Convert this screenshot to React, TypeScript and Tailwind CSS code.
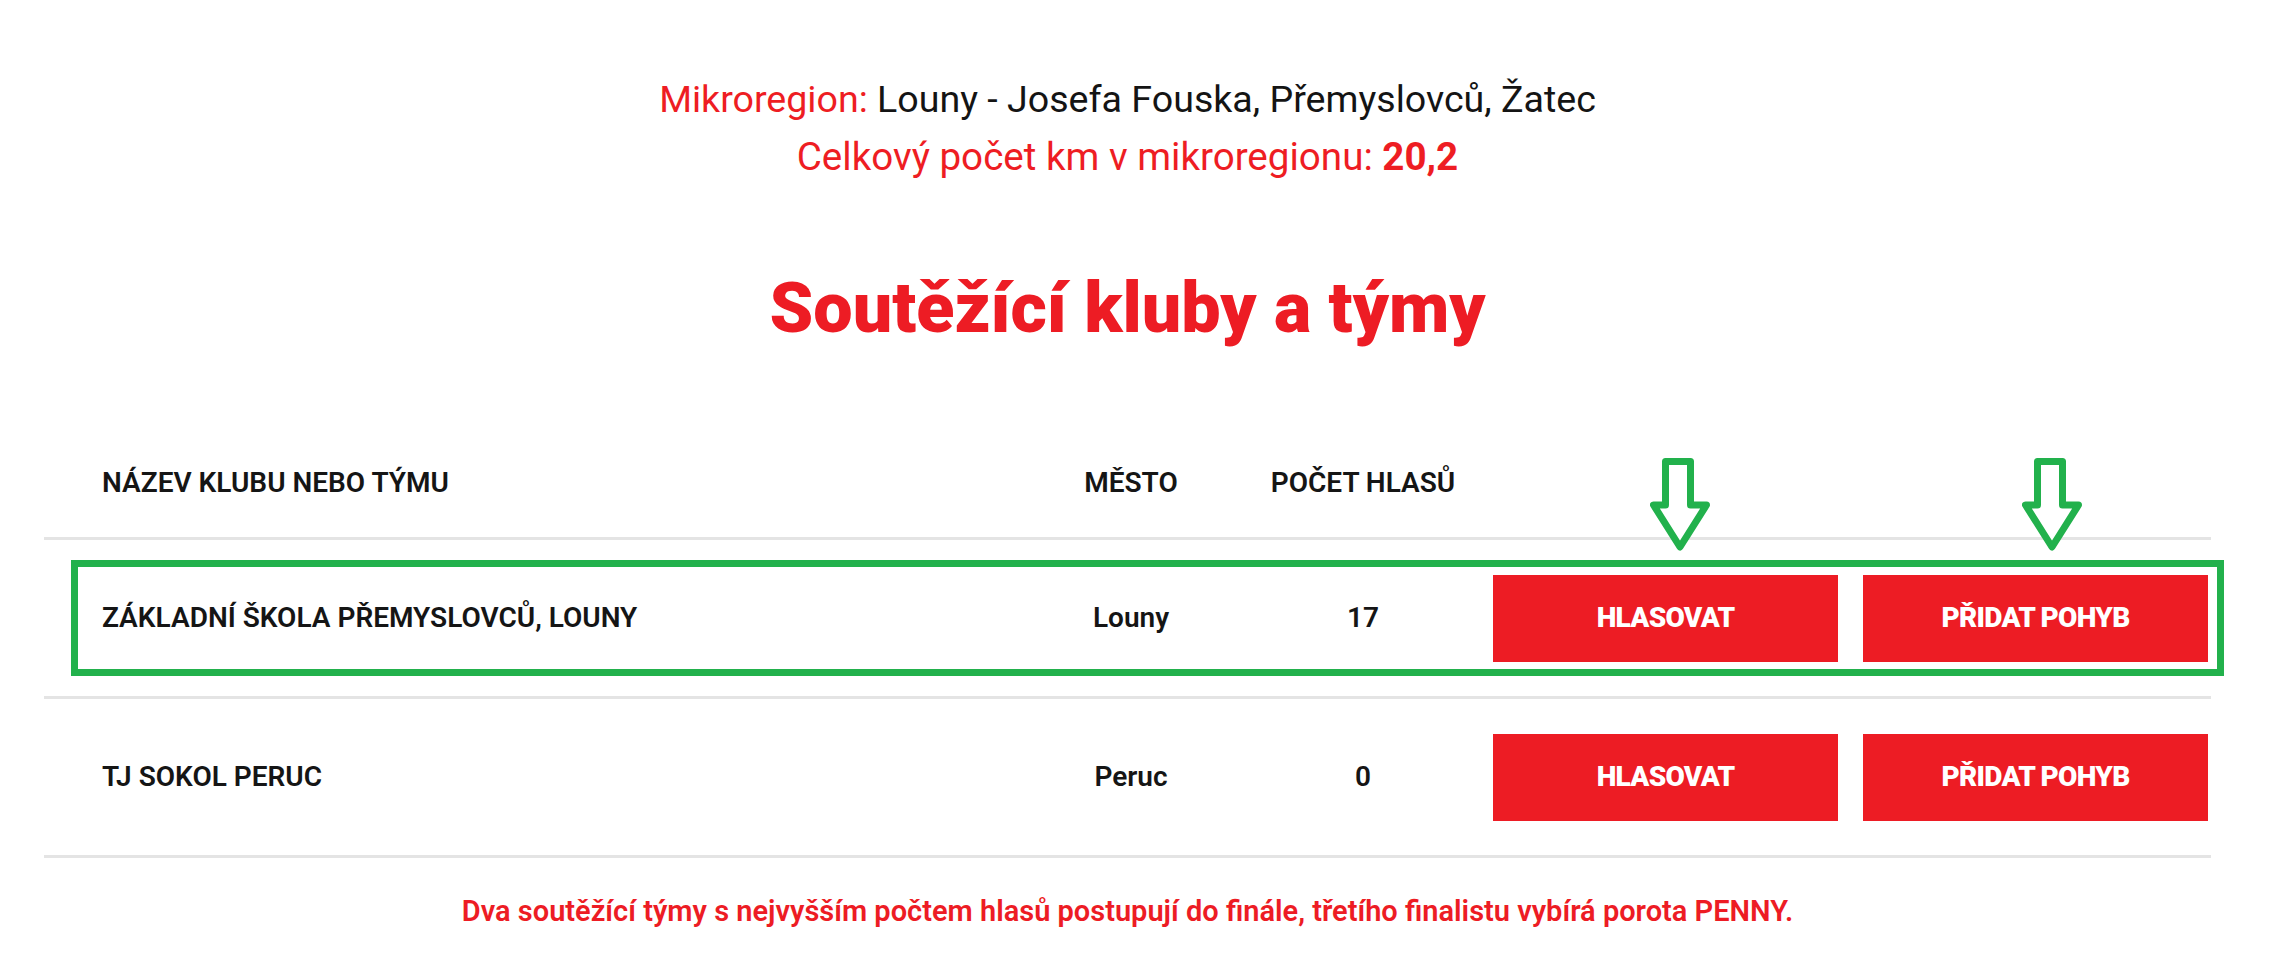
import React from "react";

type Team = {
  name: string;
  city: string;
  votes: number;
};

const teams: Team[] = [
  { name: "ZÁKLADNÍ ŠKOLA PŘEMYSLOVCŮ, LOUNY", city: "Louny", votes: 17 },
  { name: "TJ SOKOL PERUC", city: "Peruc", votes: 0 },
];

function DownArrow({ className }: { className: string }) {
  return (
    <svg
      className={className}
      width="60"
      height="95"
      viewBox="0 0 60 95"
      fill="white"
      stroke="#22b14c"
      strokeWidth="7"
      strokeLinejoin="round"
    >
      <path d="M15.5 3.5 H40.5 V47 H56.5 L30 89 L3.5 47 H15.5 Z" />
    </svg>
  );
}

function TeamRow({ team }: { team: Team }) {
  return (
    <div className="flex h-[159px] items-center border-b-[3px] border-[#e4e4e4] pr-[3px]">
      <div className="flex-1 pl-[58px] text-[28px] font-semibold leading-[40px] text-[#151515]">
        {team.name}
      </div>
      <div className="w-[170px] text-center text-[28px] font-semibold leading-[40px] text-[#151515]">
        {team.city}
      </div>
      <div className="ml-[47px] w-[200px] text-center text-[28px] font-semibold leading-[40px] text-[#151515]">
        {team.votes}
      </div>
      <button className="ml-[30px] flex h-[87px] w-[345px] items-center justify-center bg-[#ed1c24] text-[28px] font-black tracking-tight text-white">
        HLASOVAT
      </button>
      <button className="ml-[25px] flex h-[87px] w-[345px] items-center justify-center bg-[#ed1c24] text-[28px] font-black tracking-tight text-white">
        PŘIDAT POHYB
      </button>
    </div>
  );
}

export default function App() {
  return (
    <div
      className="relative min-h-[971px] w-[2276px] bg-white"
      style={{ fontFamily: "Roboto, 'Noto Sans', sans-serif" }}
    >
      <div className="ml-[44px] w-[2167px] pt-[70px]">
        <div className="text-center leading-[58px]">
          <p className="text-[37.6px] text-[#ee1d23]">
            Mikroregion: <span className="text-[#141414]">Louny - Josefa Fouska, Přemyslovců, Žatec</span>
          </p>
          <p className="text-[38.6px] text-[#ee1d23]">
            Celkový počet km v mikroregionu: <span className="font-bold">20,2</span>
          </p>
        </div>

        <h1 className="mt-[82px] text-center text-[70px] font-black leading-[80px] text-[#ed1c24]">
          Soutěžící kluby a týmy
        </h1>

        <div className="mt-[115px]">
          <div className="flex items-center border-b-[3px] border-[#e4e4e4] pb-[34px] pr-[3px]">
            <div className="flex-1 pl-[58px] text-[28px] font-semibold leading-[40px] text-[#151515]">
              NÁZEV KLUBU NEBO TÝMU
            </div>
            <div className="w-[170px] text-center text-[28px] font-semibold leading-[40px] text-[#151515]">
              MĚSTO
            </div>
            <div className="ml-[47px] w-[200px] text-center text-[28px] font-semibold leading-[40px] text-[#151515]">
              POČET HLASŮ
            </div>
            <div className="ml-[30px] w-[345px]" />
            <div className="ml-[25px] w-[345px]" />
          </div>
          {teams.map((team) => (
            <TeamRow key={team.name} team={team} />
          ))}
        </div>

        <p className="mt-[34px] text-center text-[29px] font-semibold leading-[38px] text-[#ed1c24]">
          Dva soutěžící týmy s nejvyšším počtem hlasů postupují do finále, třetího finalistu vybírá porota PENNY.
        </p>
      </div>

      {/* green annotation overlay */}
      <div className="pointer-events-none absolute left-[71px] top-[560px] h-[116px] w-[2153px] border-[7px] border-[#22b14c]" />
      <DownArrow className="absolute left-[1650px] top-[458px]" />
      <DownArrow className="absolute left-[2022px] top-[458px]" />
    </div>
  );
}
